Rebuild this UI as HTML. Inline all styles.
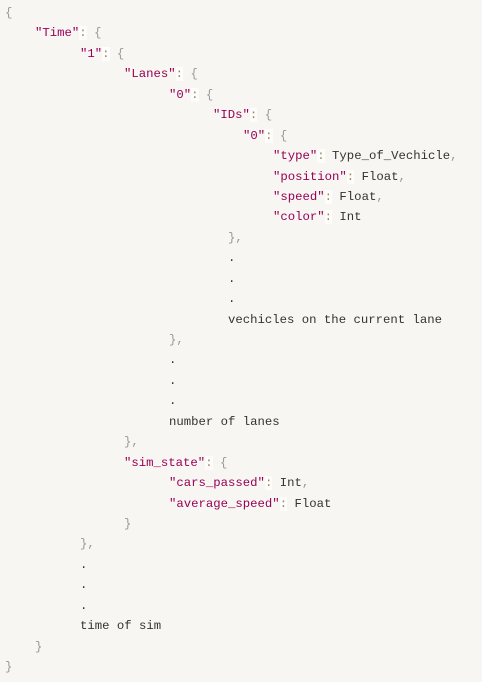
<!DOCTYPE html>
<html><head><meta charset="utf-8"><style>
html,body{margin:0;padding:0;background:#f7f6f3;width:482px;height:682px;overflow:hidden}
.w{margin:0;position:absolute;top:3px;left:0;font-family:"Liberation Mono",monospace;font-size:12.3px;line-height:20.44px;color:#333}
.l{position:relative;height:20.44px;white-space:pre}
.l span.i{position:absolute}
.k{color:#990055}.p{color:#999}.c{color:#a67f59;background:#fdfdfc}
</style></head><body><div class="w"><div class="l"><span class="i p" style="left:5px">{</span></div><div class="l"><span class="i" style="left:35px"><span class="k">"Time"</span><span class="c">:</span> <span class="p">{</span></span></div><div class="l"><span class="i" style="left:80px"><span class="k">"1"</span><span class="c">:</span> <span class="p">{</span></span></div><div class="l"><span class="i" style="left:124px"><span class="k">"Lanes"</span><span class="c">:</span> <span class="p">{</span></span></div><div class="l"><span class="i" style="left:169px"><span class="k">"0"</span><span class="c">:</span> <span class="p">{</span></span></div><div class="l"><span class="i" style="left:213px"><span class="k">"IDs"</span><span class="c">:</span> <span class="p">{</span></span></div><div class="l"><span class="i" style="left:243px"><span class="k">"0"</span><span class="c">:</span> <span class="p">{</span></span></div><div class="l"><span class="i" style="left:273px"><span class="k">"type"</span><span class="c">:</span> Type_of_Vechicle<span class="p">,</span></span></div><div class="l"><span class="i" style="left:273px"><span class="k">"position"</span><span class="c">:</span> Float<span class="p">,</span></span></div><div class="l"><span class="i" style="left:273px"><span class="k">"speed"</span><span class="c">:</span> Float<span class="p">,</span></span></div><div class="l"><span class="i" style="left:273px"><span class="k">"color"</span><span class="c">:</span> Int</span></div><div class="l"><span class="i p" style="left:228px">},</span></div><div class="l"><span class="i" style="left:228px">.</span></div><div class="l"><span class="i" style="left:228px">.</span></div><div class="l"><span class="i" style="left:228px">.</span></div><div class="l"><span class="i" style="left:228px">vechicles on the current lane</span></div><div class="l"><span class="i p" style="left:169px">},</span></div><div class="l"><span class="i" style="left:169px">.</span></div><div class="l"><span class="i" style="left:169px">.</span></div><div class="l"><span class="i" style="left:169px">.</span></div><div class="l"><span class="i" style="left:169px">number of lanes</span></div><div class="l"><span class="i p" style="left:124px">},</span></div><div class="l"><span class="i" style="left:124px"><span class="k">"sim_state"</span><span class="c">:</span> <span class="p">{</span></span></div><div class="l"><span class="i" style="left:169px"><span class="k">"cars_passed"</span><span class="c">:</span> Int<span class="p">,</span></span></div><div class="l"><span class="i" style="left:169px"><span class="k">"average_speed"</span><span class="c">:</span> Float</span></div><div class="l"><span class="i p" style="left:124px">}</span></div><div class="l"><span class="i p" style="left:80px">},</span></div><div class="l"><span class="i" style="left:80px">.</span></div><div class="l"><span class="i" style="left:80px">.</span></div><div class="l"><span class="i" style="left:80px">.</span></div><div class="l"><span class="i" style="left:80px">time of sim</span></div><div class="l"><span class="i p" style="left:35px">}</span></div><div class="l"><span class="i p" style="left:5px">}</span></div></div></body></html>
